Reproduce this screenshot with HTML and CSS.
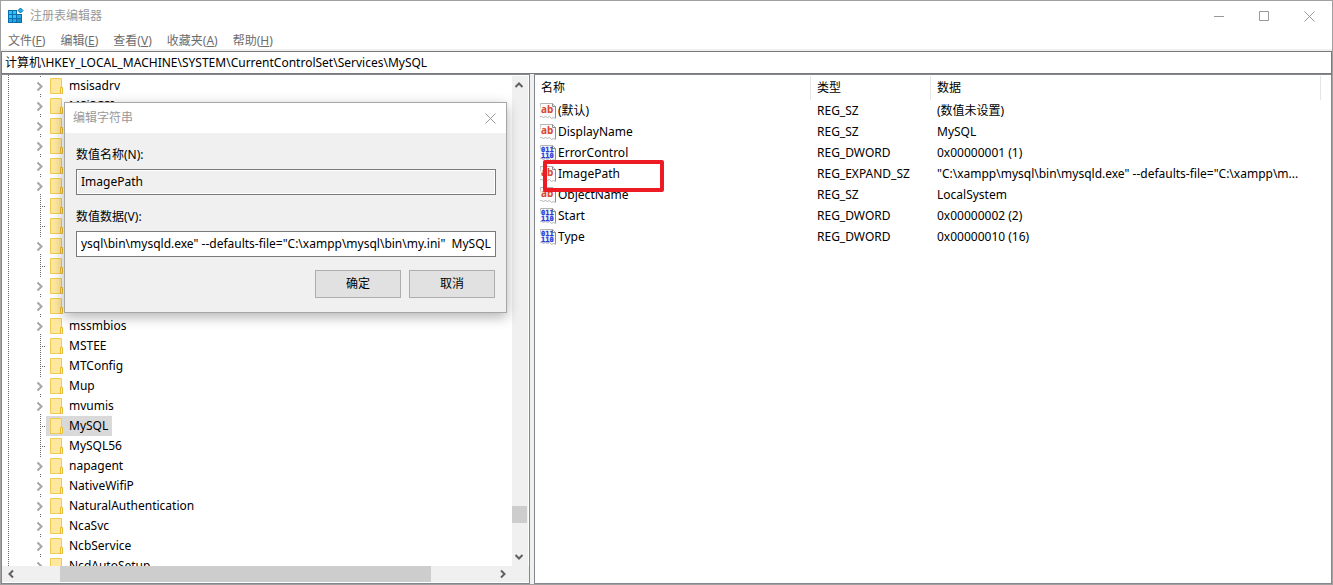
FILE: index.html
```
<!DOCTYPE html>
<html lang="zh-CN">
<head>
<meta charset="utf-8">
<title>注册表编辑器</title>
<link rel="stylesheet" href="styles.css">
</head>
<body>
<svg class="defs" aria-hidden="true">
  <symbol id="folder" viewBox="0 0 14 16">
    <path d="M.5.5h11v15H.5z" fill="#ffe89e" stroke="#f0cb52"/>
    <path d="M10.500 9.500h2v6h-2z" fill="#fff0b8" stroke="#e6bb36"/>
  </symbol>
  <symbol id="branch-open" viewBox="0 0 11 20">
    <path d="M2.500 6.500L6.500 10.500l-4 4" fill="none" stroke="#a6a6a6" stroke-width="2"/>
    <path d="M5 0h1v1H5zM5 18h1v1H5z" fill="#6a6a6a"/>
  </symbol>
  <symbol id="branch-leaf" viewBox="0 0 11 20">
    <path d="M5.500 0v20" stroke="#6a6a6a" stroke-dasharray="1 1"/>
    <path d="M7 10.500h4" stroke="#6a6a6a" stroke-dasharray="1 1"/>
  </symbol>
  <symbol id="page" viewBox="0 0 16 16">
    <path d="M.5.5h12l3 3v12l-2-1-2 1-2-2-2 1-2-1-2 1-2-1-3 .500z" fill="#fbfbfb" stroke="#b4b4b4"/>
    <path d="M12.500.5v3h3v11" fill="none" stroke="#8c8c8c"/>
  </symbol>
  <symbol id="value-string" viewBox="0 0 16 16">
    <use href="#page"/>
    <text x="1" y="10" class="glyph-string">ab</text>
  </symbol>
  <symbol id="value-binary" viewBox="0 0 16 16">
    <use href="#page"/>
    <text x="1" y="7" class="glyph-binary">011</text>
    <text x="1" y="13" class="glyph-binary">110</text>
  </symbol>
</svg>

<main class="window">
  <header class="titlebar">
    <svg class="app-icon" viewBox="0 0 16 16" aria-hidden="true">
      <path d="M0 2h9v4h5v9H0z" fill="#0a6fae"/>
      <path d="M1 3h3v3H1zM5 3h3v3H5zM1 7h3v3H1zM5 7h3v3H5z" fill="#35c1f1"/>
      <path d="M9 7h4v3H9zM1 11h3v3H1zM5 11h3v3H5z" fill="#2aa7e0"/>
      <path d="M9 11h4v3H9z" fill="#1d8ccc"/>
      <path d="M12.500 0L15 2.500 12.500 5 10 2.500z" fill="#2bb0e6" stroke="#0a6fae"/>
    </svg>
    <h1 class="title">注册表编辑器</h1>
    <div class="window-buttons">
      <button type="button" aria-label="最小化"><svg viewBox="0 0 11 11"><path d="M0 5.500h10"/></svg></button>
      <button type="button" aria-label="最大化"><svg viewBox="0 0 11 11"><path d="M.5.5h9v9h-9z"/></svg></button>
      <button type="button" aria-label="关闭"><svg viewBox="0 0 11 11"><path d="M.5.500l10 10M10.500.500l-10 10"/></svg></button>
    </div>
  </header>
  <nav class="menubar">
    <button type="button">文件(<u>F</u>)</button>
    <button type="button">编辑(<u>E</u>)</button>
    <button type="button">查看(<u>V</u>)</button>
    <button type="button">收藏夹(<u>A</u>)</button>
    <button type="button">帮助(<u>H</u>)</button>
  </nav>
  <input class="address" type="text" aria-label="地址" value="计算机\HKEY_LOCAL_MACHINE\SYSTEM\CurrentControlSet\Services\MySQL">

  <div class="panes">
    <section class="pane tree-pane">
      <ul class="tree">
        <li><svg class="branch"><use href="#branch-open"/></svg><span class="key"><svg class="folder"><use href="#folder"/></svg>msisadrv</span></li>
        <li><svg class="branch"><use href="#branch-open"/></svg><span class="key"><svg class="folder"><use href="#folder"/></svg>MSiSCSI</span></li>
        <li><svg class="branch"><use href="#branch-open"/></svg><span class="key"><svg class="folder"><use href="#folder"/></svg></span></li>
        <li><svg class="branch"><use href="#branch-open"/></svg><span class="key"><svg class="folder"><use href="#folder"/></svg></span></li>
        <li><svg class="branch"><use href="#branch-open"/></svg><span class="key"><svg class="folder"><use href="#folder"/></svg></span></li>
        <li><svg class="branch"><use href="#branch-open"/></svg><span class="key"><svg class="folder"><use href="#folder"/></svg></span></li>
        <li><svg class="branch"><use href="#branch-leaf"/></svg><span class="key"><svg class="folder"><use href="#folder"/></svg></span></li>
        <li><svg class="branch"><use href="#branch-leaf"/></svg><span class="key"><svg class="folder"><use href="#folder"/></svg></span></li>
        <li><svg class="branch"><use href="#branch-open"/></svg><span class="key"><svg class="folder"><use href="#folder"/></svg></span></li>
        <li><svg class="branch"><use href="#branch-leaf"/></svg><span class="key"><svg class="folder"><use href="#folder"/></svg></span></li>
        <li><svg class="branch"><use href="#branch-open"/></svg><span class="key"><svg class="folder"><use href="#folder"/></svg></span></li>
        <li><svg class="branch"><use href="#branch-open"/></svg><span class="key"><svg class="folder"><use href="#folder"/></svg></span></li>
        <li><svg class="branch"><use href="#branch-open"/></svg><span class="key"><svg class="folder"><use href="#folder"/></svg>mssmbios</span></li>
        <li><svg class="branch"><use href="#branch-leaf"/></svg><span class="key"><svg class="folder"><use href="#folder"/></svg>MSTEE</span></li>
        <li><svg class="branch"><use href="#branch-leaf"/></svg><span class="key"><svg class="folder"><use href="#folder"/></svg>MTConfig</span></li>
        <li><svg class="branch"><use href="#branch-open"/></svg><span class="key"><svg class="folder"><use href="#folder"/></svg>Mup</span></li>
        <li><svg class="branch"><use href="#branch-open"/></svg><span class="key"><svg class="folder"><use href="#folder"/></svg>mvumis</span></li>
        <li><svg class="branch"><use href="#branch-leaf"/></svg><span class="key selected"><svg class="folder"><use href="#folder"/></svg>MySQL</span></li>
        <li><svg class="branch"><use href="#branch-leaf"/></svg><span class="key"><svg class="folder"><use href="#folder"/></svg>MySQL56</span></li>
        <li><svg class="branch"><use href="#branch-open"/></svg><span class="key"><svg class="folder"><use href="#folder"/></svg>napagent</span></li>
        <li><svg class="branch"><use href="#branch-open"/></svg><span class="key"><svg class="folder"><use href="#folder"/></svg>NativeWifiP</span></li>
        <li><svg class="branch"><use href="#branch-open"/></svg><span class="key"><svg class="folder"><use href="#folder"/></svg>NaturalAuthentication</span></li>
        <li><svg class="branch"><use href="#branch-open"/></svg><span class="key"><svg class="folder"><use href="#folder"/></svg>NcaSvc</span></li>
        <li><svg class="branch"><use href="#branch-open"/></svg><span class="key"><svg class="folder"><use href="#folder"/></svg>NcbService</span></li>
        <li><svg class="branch"><use href="#branch-open"/></svg><span class="key"><svg class="folder"><use href="#folder"/></svg>NcdAutoSetup</span></li>
      </ul>
      <div class="scroll-v">
        <svg class="arrow" viewBox="0 0 16 16"><path d="M3.500 11L7 7.500l3.500 3.500"/></svg>
        <div class="track-v"><div class="thumb-v"></div></div>
        <svg class="arrow" viewBox="0 0 16 16"><path d="M3.500 5L7 8.500 10.500 5"/></svg>
      </div>
      <div class="scroll-h">
        <svg class="arrow" viewBox="0 0 16 16"><path d="M11 4.500L7.500 8l3.500 3.500"/></svg>
        <div class="track-h"><div class="thumb-h"></div></div>
        <svg class="arrow" viewBox="0 0 16 16"><path d="M5 4.500L8.500 8 5 11.500"/></svg>
      </div>
    </section>
    <div class="splitter"></div>
    <section class="pane list-pane">
      <table class="values">
        <colgroup><col class="col-name"><col class="col-type"><col><col class="col-rest"></colgroup>
        <thead>
          <tr><th scope="col">名称</th><th scope="col">类型</th><th scope="col">数据</th><td></td></tr>
        </thead>
        <tbody>
          <tr><td class="name"><svg><use href="#value-string"/></svg>(默认)</td><td>REG_SZ</td><td>(数值未设置)</td></tr>
          <tr><td class="name"><svg><use href="#value-string"/></svg>DisplayName</td><td>REG_SZ</td><td>MySQL</td></tr>
          <tr><td class="name"><svg><use href="#value-binary"/></svg>ErrorControl</td><td>REG_DWORD</td><td>0x00000001 (1)</td></tr>
          <tr><td class="name marked"><svg><use href="#value-string"/></svg>ImagePath</td><td>REG_EXPAND_SZ</td><td>"C:\xampp\mysql\bin\mysqld.exe" --defaults-file="C:\xampp\m...</td></tr>
          <tr><td class="name"><svg><use href="#value-string"/></svg>ObjectName</td><td>REG_SZ</td><td>LocalSystem</td></tr>
          <tr><td class="name"><svg><use href="#value-binary"/></svg>Start</td><td>REG_DWORD</td><td>0x00000002 (2)</td></tr>
          <tr><td class="name"><svg><use href="#value-binary"/></svg>Type</td><td>REG_DWORD</td><td>0x00000010 (16)</td></tr>
        </tbody>
      </table>
    </section>
  </div>
</main>

<form class="dialog" role="dialog" aria-labelledby="dialog-title">
  <div class="dialog-bar">
    <h2 class="title" id="dialog-title">编辑字符串</h2>
    <button class="dialog-close" type="button" aria-label="关闭"><svg viewBox="0 0 11 11"><path d="M.5.500l10 10M10.500.500l-10 10"/></svg></button>
  </div>
  <div class="dialog-body">
    <div class="field">
      <label for="value-name">数值名称(N):</label>
      <input id="value-name" type="text" readonly value="ImagePath">
    </div>
    <div class="field">
      <label for="value-data">数值数据(V):</label>
      <input id="value-data" type="text" value="&quot;C:\xampp\mysql\bin\mysqld.exe&quot; --defaults-file=&quot;C:\xampp\mysql\bin\my.ini&quot;  MySQL">
    </div>
    <div class="actions">
      <button type="button">确定</button>
      <button type="button">取消</button>
    </div>
  </div>
</form>
<script src="script.js"></script>
</body>
</html>
```
FILE: script.js
```
// Show the end of a value that is longer than its box.
const data = document.getElementById("value-data");
data.scrollLeft = data.scrollWidth;
```
FILE: styles.css
```
*, *::after { box-sizing: border-box; }

body, button, input, table {
  font-family: "Noto Sans", "Noto Sans CJK SC", sans-serif;
  font-size: 12px;
  line-height: 20px;
  color: #000;
}

body { margin: 0; }

button {
  padding: 0;
  border: 0;
  background: none;
}

.defs { display: none; }

.window {
  display: flex;
  flex-direction: column;
  height: 100vh;
  border: 1px solid #a0a0a0;
  background: #fff;
}

.titlebar {
  display: flex;
  align-items: center;
  height: 30px;
  padding-left: 7px;
}

.app-icon { width: 16px; height: 16px; margin-right: 6px; }

.title {
  margin: 0;
  font-size: 12px;
  font-weight: 400;
  color: #999;
}

.window-buttons { display: flex; margin-left: auto; }
.window-buttons button { width: 45px; height: 28px; }
.window-buttons svg, .dialog-close svg {
  display: block;
  width: 11px;
  height: 11px;
  margin: 0 auto;
  fill: none;
  stroke: #999;
}

.menubar {
  display: flex;
  gap: 15px;
  height: 20px;
  padding-left: 7px;
  border-bottom: 2px solid #f0f0f0;
  flex: none;
}
.menubar button { color: #6d6d6d; }

.address {
  height: 23px;
  flex: none;
  padding: 0 3px 1px;
  border: 1px solid #7a7a7a;
}

.panes {
  display: grid;
  grid-template-columns: 529fr 4px 798fr;
  flex: 1;
  min-height: 0;
  background: #f0f0f0;
}

.pane {
  min-width: 0;
  min-height: 0;
  border: 1px solid #828790;
  background: #fff;
}

.tree-pane {
  display: grid;
  grid-template: minmax(0, 1fr) 17px / minmax(0, 1fr) 17px;
}

.tree {
  margin: 0 0 0 6px;
  padding: 1px 0 0 27px;
  overflow: hidden;
  list-style: none;
  background: repeating-linear-gradient(#6a6a6a 0 1px, transparent 1px 2px) left / 1px 100% no-repeat;
}
.tree li { display: flex; height: 20px; }

.branch { width: 11px; height: 20px; }
.key {
  display: flex;
  align-items: center;
  gap: 5px;
  padding: 0 4px;
}
.folder { width: 14px; height: 16px; }
.selected { background: #d9d9d9; }

.scroll-v, .scroll-h { display: flex; background: #f0f0f0; }
.scroll-v {
  flex-direction: column;
  margin-top: 1px;
  border-right: 1px solid #fff;
}
.scroll-h {
  grid-column: 1 / -1;
  padding-right: 17px;
  border-bottom: 1px solid #fff;
}
.arrow {
  width: 16px;
  height: 16px;
  flex: none;
  fill: none;
  stroke: #606060;
  stroke-width: 2;
}
.track-v, .track-h { display: flex; flex: 1; }
.track-v { flex-direction: column; padding-top: 414px; }
.thumb-v { width: 15px; height: 17px; background: #cdcdcd; }
.track-h { padding-left: 42px; }
.thumb-h { width: 85%; background: #cdcdcd; }

.values {
  width: 100%;
  margin-top: 1px;
  table-layout: fixed;
  border-collapse: separate;
  border-spacing: 0;
}
.col-name { width: 276px; }
.col-type { width: 120px; }
.col-rest { width: 10px; }
.values th, .values td {
  height: 21px;
  padding: 0 6px;
  text-align: left;
  font-weight: 400;
  white-space: nowrap;
}
.values th { height: 24px; border-right: 1px solid #e5e5e5; }
.values .name { position: relative; padding-left: 5px; }
.name svg {
  width: 16px;
  height: 16px;
  margin-right: 2px;
  vertical-align: middle;
}

.marked::after {
  content: "";
  position: absolute;
  top: -3px;
  left: 8px;
  width: 121px;
  height: 32px;
  border: 4px solid #ed1c24;
  border-radius: 2px;
  z-index: 1;
}

.glyph-string {
  font: bold 10px "Noto Sans", sans-serif;
  fill: #d8482a;
}
.glyph-binary {
  font: bold 7px "DejaVu Sans Mono", monospace;
  fill: #2440d8;
  stroke: #2440d8;
  stroke-width: 0.3px;
}

.dialog {
  position: absolute;
  top: 102px;
  left: 64px;
  width: 443px;
  border: 1px solid #a6a6a6;
  background: #f0f0f0;
  box-shadow: 0 4px 12px rgba(0, 0, 0, 0.3);
  z-index: 2;
}

.dialog-bar {
  display: flex;
  align-items: center;
  justify-content: space-between;
  height: 30px;
  padding-left: 8px;
  background: #fff;
}
.dialog-close { width: 31px; height: 28px; }

.dialog-body {
  display: flex;
  flex-direction: column;
  gap: 12px;
  padding: 12px 10px 14px 11px;
}

.field { display: flex; flex-direction: column; gap: 4px; }
.field input {
  height: 26px;
  padding: 0 4px 2px;
  border: 1px solid #7a7a7a;
  background: #fff;
}
.field input:read-only { background: #f0f0f0; box-shadow: inset 0 0 0 1px #fff; }

.actions {
  display: flex;
  justify-content: flex-end;
  gap: 8px;
  padding: 1px 1px 0 0;
}
.actions button {
  width: 86px;
  height: 28px;
  border: 1px solid #adadad;
  background: #e1e1e1;
}
```
